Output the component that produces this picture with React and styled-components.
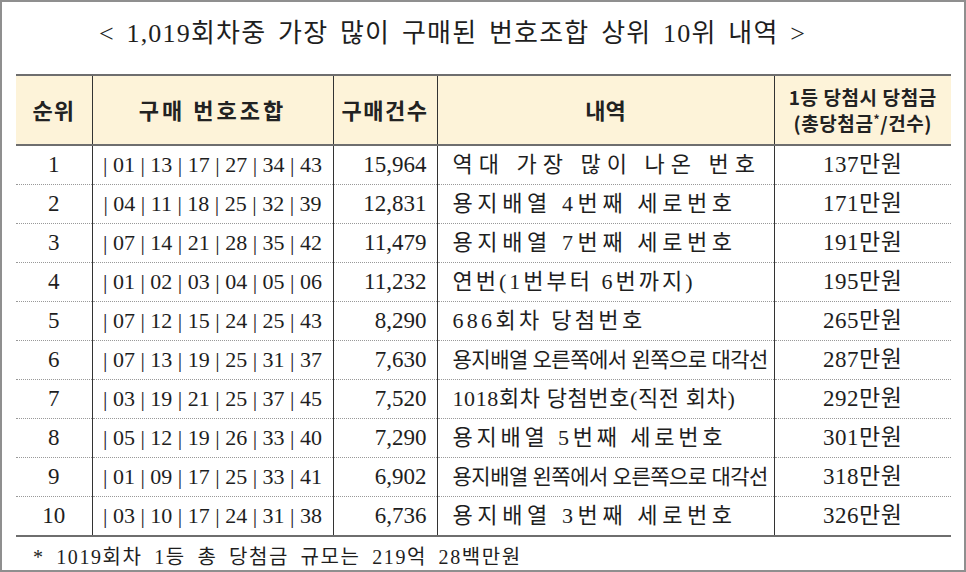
import React from "react";
import styled, { createGlobalStyle } from "styled-components";

const GlobalStyle = createGlobalStyle`
  html, body { margin: 0; padding: 0; background: #fff; }
  body { font-family: "Liberation Serif", "Noto Sans CJK KR", serif; color: #222; }
`;

const Frame = styled.div`
  box-sizing: border-box;
  width: 966px;
  height: 572px;
  border: 2px solid #8f8f8f;
  padding: 0 13px 0 14px;
  display: flex;
  flex-direction: column;
`;

const Title = styled.h1`
  margin: 0;
  height: 73px;
  display: flex;
  align-items: center;
  justify-content: center;
  padding: 0 62px 16px 0;
  box-sizing: border-box;
  font-family: "Liberation Serif", "Noto Sans CJK KR", serif;
  font-weight: 400;
  font-size: 26px;
  letter-spacing: 1.2px;
  word-spacing: 4px;
  color: #1e1e1e;
`;

const Table = styled.table`
  width: 935px;
  border-collapse: collapse;
  table-layout: fixed;
  border-top: 2px solid #6e6e6e;
  border-bottom: 2px solid #6e6e6e;
`;

const Head = styled.th`
  height: 68px;
  padding: 0;
  background: #fdf3d9;
  font-family: "Noto Sans CJK KR", sans-serif;
  font-weight: 700;
  font-size: ${(p) => p.$size || 22}px;
  line-height: 1.35;
  letter-spacing: ${(p) => p.$ls || 0}px;
  color: #222;
  border-bottom: 2px solid #6e6e6e;
  border-left: ${(p) => (p.$first ? "none" : "1.5px solid #333")};
  text-align: center;
  white-space: nowrap;
`;

const Sup = styled.sup`
  font-size: 12px;
  vertical-align: 7px;
`;

const Row = styled.tr`
  height: 39px;
  & + & td { border-top: 1px dotted #999; }
`;

const Cell = styled.td`
  padding: 0;
  padding-left: ${(p) => (p.$align === "left" ? "15px" : "0")};
  padding-right: ${(p) => (p.$align === "right" ? "10px" : "0")};
  text-align: ${(p) => p.$align || "center"};
  border-left: ${(p) => (p.$first ? "none" : "1.5px solid #333")};
  font-family: "Liberation Serif", "Noto Sans CJK KR", serif;
  font-size: ${(p) => p.$size || 23}px;
  letter-spacing: ${(p) => p.$ls || 0}px;
  color: #1e1e1e;
  white-space: nowrap;
  overflow: hidden;
  line-height: 38px;
`;

const Note = styled.p`
  margin: 0;
  padding: 4px 0 0 17px;
  font-family: "Liberation Serif", "Noto Sans CJK KR", serif;
  font-size: 20px;
  letter-spacing: 1.6px;
  word-spacing: 5px;
  color: #1e1e1e;
`;

const rows = [
  ["1", [1, 13, 17, 27, 34, 43], "15,964", "역대 가장 많이 나온 번호", "137만원", 6, 22],
  ["2", [4, 11, 18, 25, 32, 39], "12,831", "용지배열 4번째 세로번호", "171만원", 4.6, 22],
  ["3", [7, 14, 21, 28, 35, 42], "11,479", "용지배열 7번째 세로번호", "191만원", 4.6, 22],
  ["4", [1, 2, 3, 4, 5, 6], "11,232", "연번(1번부터 6번까지)", "195만원", 3, 22],
  ["5", [7, 12, 15, 24, 25, 43], "8,290", "686회차 당첨번호", "265만원", 3.3, 22],
  ["6", [7, 13, 19, 25, 31, 37], "7,630", "용지배열 오른쪽에서 왼쪽으로 대각선", "287만원", -0.5, 21],
  ["7", [3, 19, 21, 25, 37, 45], "7,520", "1018회차 당첨번호(직전 회차)", "292만원", 0.6, 22],
  ["8", [5, 12, 19, 26, 33, 40], "7,290", "용지배열 5번째 세로번호", "301만원", 3.8, 22],
  ["9", [1, 9, 17, 25, 33, 41], "6,902", "용지배열 왼쪽에서 오른쪽으로 대각선", "318만원", -0.5, 21],
  ["10", [3, 10, 17, 24, 31, 38], "6,736", "용지배열 3번째 세로번호", "326만원", 4.6, 22],
];

const pad = (n) => String(n).padStart(2, "0");

export default function App() {
  return (
    <>
      <GlobalStyle />
      <Frame>
        <Title>&lt; 1,019회차중 가장 많이 구매된 번호조합 상위 10위 내역 &gt;</Title>
        <Table>
          <colgroup>
            <col style={{ width: 76 }} />
            <col style={{ width: 241 }} />
            <col style={{ width: 104 }} />
            <col style={{ width: 337 }} />
            <col style={{ width: 177 }} />
          </colgroup>
          <thead>
            <tr>
              <Head $first $ls={1}>순위</Head>
              <Head $ls={3}>구매 번호조합</Head>
              <Head $ls={1.5}>구매건수</Head>
              <Head $ls={0}>내역</Head>
              <Head $size={19} $ls={0.6}>
                1등 당첨시 당첨금
                <br />
                (총당첨금<Sup>*</Sup>/건수)
              </Head>
            </tr>
          </thead>
          <tbody>
            {rows.map(([rank, nums, count, desc, prize, ls, size]) => (
              <Row key={rank}>
                <Cell $first>{rank}</Cell>
                <Cell $size={22}>{"| " + nums.map(pad).join(" | ")}</Cell>
                <Cell $align="right">{count}</Cell>
                <Cell $align="left" $ls={ls} $size={size}>{desc}</Cell>
                <Cell $ls={0.5}>{prize}</Cell>
              </Row>
            ))}
          </tbody>
        </Table>
        <Note>* 1019회차 1등 총 당첨금 규모는 219억 28백만원</Note>
      </Frame>
    </>
  );
}
